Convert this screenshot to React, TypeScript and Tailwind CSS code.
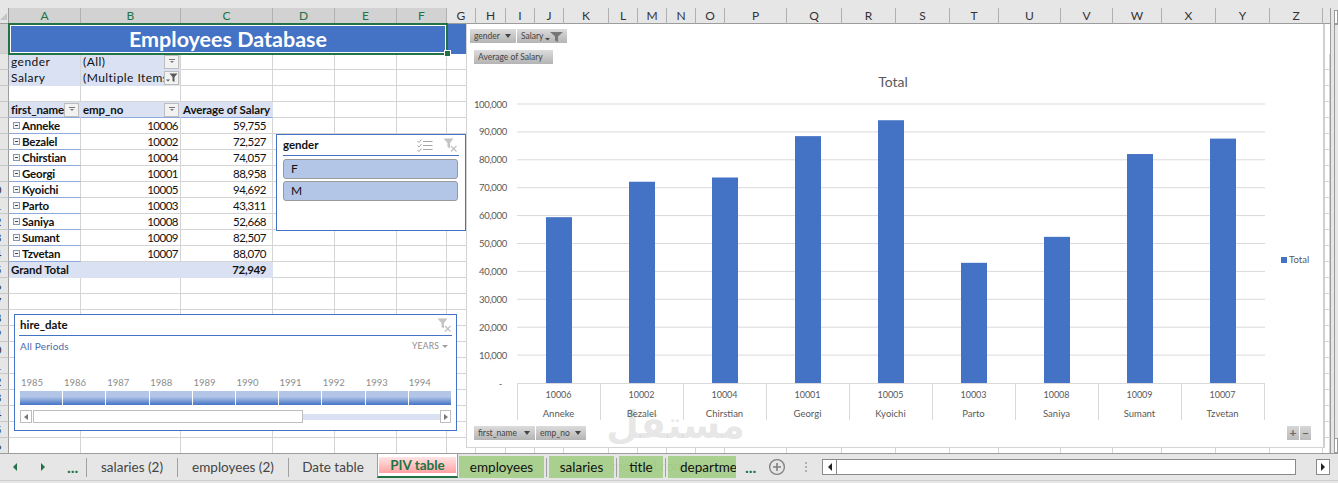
import type { ReactNode } from 'react';
import clsx from 'clsx';

const colNames = ['A','B','C','D','E','F','G','H','I','J','K','L','M','N','O','P','Q','R','S','T','U','V','W','X','Y','Z',''];
const rowCount = 27;

const people: [string, string, string][] = [
  ['Anneke', '10006', '59,755'],
  ['Bezalel', '10002', '72,527'],
  ['Chirstian', '10004', '74,057'],
  ['Georgi', '10001', '88,958'],
  ['Kyoichi', '10005', '94,692'],
  ['Parto', '10003', '43,311'],
  ['Saniya', '10008', '52,668'],
  ['Sumant', '10009', '82,507'],
  ['Tzvetan', '10007', '88,070'],
];
const salaries = [59755, 72527, 74057, 88958, 94692, 43311, 52668, 82507, 88070];
const years = ['1985','1986','1987','1988','1989','1990','1991','1992','1993','1994'];

function ClearFilter() {
  return (
    <svg width="15" height="14" viewBox="0 0 15 14">
      <path d="M0.5 0.5h10L7 5v5.5L4.5 9V5z" fill="#c4c4c4" />
      <path d="M8 8l5.5 5.5M13.5 8L8 13.5" stroke="#bdbdbd" strokeWidth="1.1" />
    </svg>
  );
}

function MultiSelect() {
  return (
    <svg width="16" height="13" viewBox="0 0 16 13" fill="none" stroke="#a6a6a6">
      <path d="M0.5 2l1.5 1.5L4.5 0.5M0.5 6.5L2 8l2.5-3M0.5 11L2 12.5l2.5-3" />
      <path d="M6 2.5h9.5M6 6.5h9.5M6 10.5h9.5" />
    </svg>
  );
}

function DropDown({ funnel }: { funnel?: boolean }) {
  return (
    <div className="w-[15px] h-[14px] shrink-0 mr-px bg-[#f2f2f2] border border-[#bdbdbd] flex items-center justify-center">
      {funnel ? (
        <svg width="12" height="10" viewBox="0 0 12 10">
          <path d="M3.5 0.5h8L8.5 4v5L6.5 8V4z" fill="#595959" />
          <path d="M0 6.5h4L2 8.5z" fill="#595959" />
        </svg>
      ) : (
        <svg width="6" height="5" viewBox="0 0 6 5">
          <path d="M0 0.5h6" stroke="#777" />
          <path d="M1 2h4L3 4z" fill="#777" />
        </svg>
      )}
    </div>
  );
}

function Collapse() {
  return (
    <span className="w-[7px] h-[7px] ml-[4px] mr-[2px] shrink-0 border border-[#8797b0] bg-[#f3f5f9] flex items-center justify-center">
      <span className="w-[3px] h-px bg-[#444]" />
    </span>
  );
}

function cellFor(r: number, c: number): { className?: string; content?: ReactNode } {
  if (r === 2 || r === 3) {
    if (c === 0) return { className: 'bg-[#d9e1f2] border-b-[#d9e1f2]', content: <span className="pl-[2px] tracking-[0.45px]">{r === 2 ? 'gender' : 'Salary'}</span> };
    if (c === 1)
      return {
        className: 'bg-[#d9e1f2] border-b-[#d9e1f2] justify-between',
        content: (
          <>
            <span className="pl-[2px] tracking-[0.45px] overflow-hidden whitespace-nowrap">{r === 2 ? '(All)' : '(Multiple Items)'}</span>
            <DropDown funnel={r === 3} />
          </>
        ),
      };
  }
  if (r === 5) {
    if (c === 0)
      return {
        className: 'bg-[#d9e1f2] border-b-[#8ea9db] font-bold justify-between border-r-[#d9e1f2] text-[11.5px] tracking-[-0.1px]',
        content: (
          <>
            <span className="pl-[2px] overflow-hidden whitespace-nowrap">first_name</span>
            <DropDown />
          </>
        ),
      };
    if (c === 1)
      return {
        className: 'bg-[#d9e1f2] border-b-[#8ea9db] font-bold justify-between border-r-[#d9e1f2] text-[11.5px] tracking-[-0.1px]',
        content: (
          <>
            <span className="pl-[2px]">emp_no</span>
            <DropDown />
          </>
        ),
      };
    if (c === 2) return { className: 'bg-[#d9e1f2] border-b-[#8ea9db] font-bold border-r-[#d9e1f2] text-[11.5px] tracking-[-0.1px]', content: <span className="pl-[2px] whitespace-nowrap">Average of Salary</span> };
  }
  if (r >= 6 && r <= 14) {
    const p = people[r - 6];
    if (c === 0)
      return {
        className: 'border-b-[#8ea9db] font-bold text-[11.5px] tracking-[-0.2px]',
        content: (
          <>
            <Collapse />
            <span>{p[0]}</span>
          </>
        ),
      };
    if (c === 1) return { className: 'justify-end pr-[2px] text-[11.5px] tracking-[-0.5px]', content: p[1] };
    if (c === 2) return { className: 'justify-end pr-[6px] text-[11.5px] tracking-[-0.5px]', content: p[2] };
  }
  if (r === 15) {
    if (c === 0) return { className: 'bg-[#d9e1f2] border-r-[#d9e1f2] border-b-[#d9e1f2] font-bold text-[11.5px] tracking-[-0.1px]', content: <span className="pl-[2px] whitespace-nowrap">Grand Total</span> };
    if (c === 1) return { className: 'bg-[#d9e1f2] border-r-[#d9e1f2] border-b-[#d9e1f2]' };
    if (c === 2) return { className: 'bg-[#d9e1f2] border-r-[#d9e1f2] border-b-[#d9e1f2] font-bold justify-end pr-[6px] text-[11.5px] tracking-[-0.4px]', content: '72,949' };
  }
  return {};
}

function Sheet() {
  const rows = Array.from({ length: rowCount - 1 }, (_, i) => i + 1);
  return (
    <div className="grid grid-cols-[9px_72px_100px_92px_62px_62px_50px_29px_30px_29px_29px_45px_29px_29px_29px_29px_62px_55px_54px_54px_49px_62px_52px_49px_54px_54px_53px_7px] grid-rows-[16px_30px] auto-rows-[16px] text-[12px] text-[#111] bg-white">
      <div className="bg-[#e6e6e6] border-r border-b border-[#9c9c9c] relative overflow-hidden">
        <span className="absolute right-px bottom-[3px] border-l-[7px] border-b-[7px] border-l-transparent border-b-[#c4c4c4]" />
      </div>
      {colNames.map((name, i) => (
        <div
          key={i}
          className={clsx(
            'flex items-center justify-center border-b border-b-[#9c9c9c] border-r',
            i < 6 ? 'bg-[#d2d2d2] text-[#217346] border-r-[#b0b0b0]' : 'bg-[#e6e6e6] text-[#333] border-r-[#b0b0b0]',
            i === 26 && 'border-r-0'
          )}
        >
          {name}
        </div>
      ))}
      {rows.map((r) => (
        <RowCells key={r} r={r} />
      ))}
    </div>
  );
}

function RowCells({ r }: { r: number }) {
  // the row header is squeezed: only the right end of a 27px wide column shows
  const head = (
    <div
      className={clsx(
        'border-r border-r-[#9c9c9c] border-b border-b-[#c8c8c8] flex justify-end items-center overflow-hidden text-[12px] text-[#333]',
        r === 1 ? 'bg-[#d2d2d2]' : 'bg-[#e6e6e6]'
      )}
    >
      <span className="w-[27px] shrink-0 text-center">{r}</span>
    </div>
  );
  if (r === 1) {
    return (
      <>
        {head}
        <div className="col-span-6 relative bg-[#4472c4] text-white font-bold text-[21.5px] flex items-center justify-center">
          Employees Database
          <div className="absolute left-[-1px] top-[-1px] right-[-1px] bottom-[-1px] border-2 border-[#217346]">
            <div className="w-full h-full border border-white" />
          </div>
          <div className="absolute right-[-4px] bottom-[-3px] w-[7px] h-[7px] bg-[#217346] border border-white" />
        </div>
        <div className="bg-[#4472c4]" />
        {colNames.slice(7).map((_, i) => (
          <div key={i} className="bg-white" />
        ))}
      </>
    );
  }
  return (
    <>
      {head}
      {colNames.map((_, c) => {
        const cell = cellFor(r, c);
        return (
          <div key={c} className={clsx('flex items-center min-w-0 border-r border-b border-[#d4d4d4]', cell.className)}>
            {cell.content}
          </div>
        );
      })}
    </>
  );
}

function GenderSlicer() {
  return (
    <div className="absolute left-[276px] top-[126px] w-[190px] h-[97px] bg-white border border-[#4472c4] text-[12px] text-[#111] px-[6px]">
      <div className="h-[21px] flex items-center justify-between border-b border-[#4472c4] pr-px">
        <span className="font-bold text-[11.5px]">gender</span>
        <span className="flex items-center gap-[10px]">
          <MultiSelect />
          <ClearFilter />
        </span>
      </div>
      <div className="mt-[3px] flex flex-col gap-[2px] pr-px">
        <div className="h-[20px] rounded-[3px] bg-[#b4c6e7] border border-[#9a9a9a] flex items-center pl-[7px]">F</div>
        <div className="h-[20px] rounded-[3px] bg-[#b4c6e7] border border-[#9a9a9a] flex items-center pl-[7px]">M</div>
      </div>
    </div>
  );
}

function HireTimeline() {
  return (
    <div className="absolute left-[14px] top-[306px] w-[443px] h-[117px] bg-white border border-[#4472c4] px-[4px]">
      <div className="h-[21px] flex items-center justify-between border-b border-[#4472c4] text-[11.5px] font-bold text-[#111] pl-px">
        <span>hire_date</span>
        <ClearFilter />
      </div>
      <div className="h-[20px] pl-px flex items-center justify-between text-[10px] tracking-[0.2px]">
        <span className="text-[#4a69a6]">All Periods</span>
        <span className="text-[#8a8a8a] text-[8.5px] flex items-center gap-[3px] pr-[4px]">
          YEARS
          <span className="border-x-[3px] border-t-[3px] border-x-transparent border-t-[#a0a0a0]" />
        </span>
      </div>
      <div className="mt-[19px] ml-px flex text-[9.5px] text-[#8c8c8c] h-[16px] items-center w-[431px]">
        {years.map((y) => (
          <span key={y} className="flex-1 pl-px">{y}</span>
        ))}
      </div>
      <div className="ml-px flex w-[431px] h-[14px] gap-px">
        {years.map((y) => (
          <div key={y} className="flex-1 bg-linear-to-b from-[#b4c6e7] from-40% to-[#4472c4]" />
        ))}
      </div>
      <div className="ml-px mt-[5px] w-[431px] h-[13px] flex items-center">
        <div className="w-[12px] h-full border border-[#bdbdbd] flex items-center justify-center">
          <span className="border-y-[3px] border-r-[4px] border-y-transparent border-r-[#777]" />
        </div>
        <div className="w-[270px] h-full ml-px border border-[#bdbdbd] bg-white" />
        <div className="flex-1 h-[6px] bg-[#d9e1f2]" />
        <div className="w-[11px] h-full border border-[#bdbdbd] flex items-center justify-center">
          <span className="border-y-[3px] border-l-[4px] border-y-transparent border-l-[#777]" />
        </div>
      </div>
    </div>
  );
}

function FieldButton({ label, className, funnel, arrow = true }: { label: string; className: string; funnel?: boolean; arrow?: boolean }) {
  return (
    <div className={clsx('absolute h-[14px] bg-linear-to-b from-[#dcdcdc] to-[#b4b4b4] text-[8.5px] text-[#444] flex items-center justify-between pl-[4px] pr-[4px] whitespace-nowrap', className)}>
      <span>{label}</span>
      {funnel ? (
        <svg width="18" height="11" viewBox="0 0 18 11">
          <path d="M5 1h13l-5 4.5V11l-3-1.5V5.5z" fill="#777" />
          <path d="M0 7h5L2.5 9.5z" fill="#444" />
        </svg>
      ) : arrow ? (
        <span className="mr-px border-x-[3.5px] border-t-[4px] border-x-transparent border-t-[#444]" />
      ) : null}
    </div>
  );
}

function ChartPlot() {
  const left = 517;
  const right = 1265;
  const zero = 383;
  const step = 83;
  const ticks = Array.from({ length: 11 }, (_, i) => i);
  return (
    <svg width="857" height="423" className="absolute left-0 top-0 font-[Lato,sans-serif]">
      <g transform="translate(-467,-24)">
        <text x="893" y="87" textAnchor="middle" fontSize="14" fill="#595959">Total</text>
        {ticks.map((t) => {
          const y = zero - t * 27.9;
          return (
            <g key={t}>
              {t > 0 && <line x1={left} x2={right} y1={y} y2={y} stroke="#d9d9d9" />}
              <text x={t === 0 ? 502 : 507} y={y + 3.5} textAnchor="end" fontSize="9.5" letterSpacing="-0.3" fill="#595959">
                {t === 0 ? '-' : (t * 10000).toLocaleString('en-US')}
              </text>
            </g>
          );
        })}
        {salaries.map((v, i) => {
          const h = (v / 1000) * 2.775;
          return <rect key={i} x={left + 29 + i * step} y={zero - h} width="26" height={h} fill="#4472c4" />;
        })}
        <line x1={left} x2={right} y1={zero + 0.5} y2={zero + 0.5} stroke="#d9d9d9" />
        {Array.from({ length: 10 }, (_, i) => (
          <line key={i} x1={left + 0.5 + i * step} x2={left + 0.5 + i * step} y1={zero} y2={420} stroke="#d9d9d9" />
        ))}
        {people.map((p, i) => (
          <g key={p[0]} textAnchor="middle" fill="#595959">
            <text x={left + 41.5 + i * step} y="398" fontSize="9">{p[1]}</text>
            <text x={left + 41.5 + i * step} y="417" fontSize="9.5">{p[0]}</text>
          </g>
        ))}
        <rect x="1281" y="257" width="6" height="6" fill="#4472c4" />
        <text x="1289" y="262.5" fontSize="9.5" fill="#595959">Total</text>
      </g>
    </svg>
  );
}

function PivotChart() {
  return (
    <div className="absolute left-[466px] top-[16px] w-[859px] h-[424px] bg-white border-l border-b border-[#d4d4d4] border-r-2 border-r-[#d0d0d0]">
      <ChartPlot />
      <FieldButton label="gender" className="left-[3px] top-[5px] w-[46px]" />
      <FieldButton label="Salary" className="left-[50px] top-[5px] w-[50px]" funnel />
      <FieldButton label="Average of Salary" className="left-[7px] top-[26px] w-[79px]" arrow={false} />
      <FieldButton label="first_name" className="left-[7px] top-[402px] w-[61px]" />
      <FieldButton label="emp_no" className="left-[69px] top-[402px] w-[50px]" />
      <div className="absolute left-[820px] top-[402px] w-[12px] h-[14px] bg-linear-to-b from-[#d6d6d6] to-[#bcbcbc] text-[#666] font-bold text-[12px] leading-[14px] text-center">+</div>
      <div className="absolute left-[833px] top-[402px] w-[11px] h-[14px] bg-linear-to-b from-[#d6d6d6] to-[#bcbcbc] text-[#666] font-bold text-[12px] leading-[14px] text-center">−</div>
    </div>
  );
}

function TabSep() {
  return <span className="w-px h-[19px] mx-[2px] bg-[#a0a0a0] shrink-0" />;
}

function SheetTabs() {
  return (
    <div className="h-[28px] border-t border-[#9c9c9c] border-b border-b-[#cfcfcf] flex items-center shrink-0 text-[13.5px] text-[#444] relative">
      <div className="w-[86px] h-full flex items-center text-[#217346] shrink-0">
        <span className="ml-[13px] border-y-[4px] border-r-[4px] border-y-transparent border-r-[#217346]" />
        <span className="ml-[24px] border-y-[4px] border-l-[4px] border-y-transparent border-l-[#217346]" />
        <span className="ml-[22px] font-bold leading-none text-[16px]">...</span>
      </div>
      <span className="w-px h-[19px] bg-[#a0a0a0] shrink-0" />
      <div className="w-[90px] text-center">salaries (2)</div>
      <span className="w-px h-[19px] bg-[#a0a0a0] shrink-0" />
      <div className="w-[110px] text-center">employees (2)</div>
      <span className="w-px h-[19px] bg-[#a0a0a0] shrink-0" />
      <div className="w-[88px] text-center">Date table</div>
      <div className="w-[81px] h-[24px] self-start bg-white border-x border-[#9c9c9c] border-b-2 border-b-[#217346] flex items-center justify-center px-px shrink-0">
        <div className="w-full h-[16px] bg-linear-to-b from-[#ffe4e4] to-[#ffa3a3] font-bold text-[#217346] text-center leading-[16px]">PIV table</div>
      </div>
      <div className="flex items-center ml-px text-[#111] self-start mt-[2px]">
        <div className="w-[85px] h-[22px] bg-[#a9d08e] flex items-center justify-center">employees</div>
        <TabSep />
        <div className="w-[65px] h-[22px] bg-[#a9d08e] flex items-center justify-center">salaries</div>
        <TabSep />
        <div className="w-[44px] h-[22px] bg-[#a9d08e] flex items-center justify-center">title</div>
        <TabSep />
        <div className="w-[68px] h-[22px] bg-[#a9d08e] overflow-hidden flex items-center pl-[12px] whitespace-nowrap">departments</div>
      </div>
      <span className="ml-[9px] font-bold text-[#217346] leading-none text-[16px]">...</span>
      <svg width="18" height="18" viewBox="0 0 18 18" className="ml-[12px]" fill="none" stroke="#7f7f7f" strokeWidth="1.3">
        <circle cx="9" cy="9" r="7.4" />
        <path d="M9 5v8M5 9h8" strokeWidth="1.6" />
      </svg>
      <span className="ml-[19px] w-[2px] h-[10px] border-l-2 border-dotted border-[#b0b0b0]" />
      <div className="ml-[15px] h-[16px] flex items-stretch">
        <div className="w-[15px] bg-white border border-[#8a8a8a] flex items-center justify-center">
          <span className="border-y-[4px] border-r-[4px] border-y-transparent border-r-[#222]" />
        </div>
        <div className="w-[459px] bg-white border-y border-r border-[#8a8a8a]" />
        <div className="w-[20px]" />
        <div className="w-[14px] bg-white border border-[#8a8a8a] flex items-center justify-center">
          <span className="border-y-[4px] border-l-[4px] border-y-transparent border-l-[#222]" />
        </div>
      </div>
    </div>
  );
}

export default function App() {
  return (
    <div className="relative w-[1338px] h-[483px] overflow-hidden flex flex-col bg-[#e6e6e6] font-[Lato,sans-serif]">
      <div className="h-2 shrink-0" />
      <div className="flex h-[445px] shrink-0">
        <div className="relative w-[1331px] h-full overflow-hidden border-r border-[#9c9c9c] shrink-0">
          <Sheet />
          <GenderSlicer />
          <HireTimeline />
          <PivotChart />
        </div>
        <div className="flex-1 flex flex-col pl-[3px] pt-[2px]">
          <div className="h-[14px] bg-white border border-[#9c9c9c]" />
          <div className="flex-1 border-l border-[#9c9c9c] border-t" />
          <div className="h-[15px] bg-white border border-[#9c9c9c]" />
        </div>
      </div>
      <SheetTabs />
      <div className="absolute left-[606px] top-[400px] text-[38px] leading-[50px] font-bold text-black/10 font-['DejaVu_Sans',sans-serif] pointer-events-none" dir="rtl">
        مستقل
      </div>
      <div className="absolute left-[612px] top-[457px] text-[13px] text-black/5 pointer-events-none">mostaql.com</div>
    </div>
  );
}
